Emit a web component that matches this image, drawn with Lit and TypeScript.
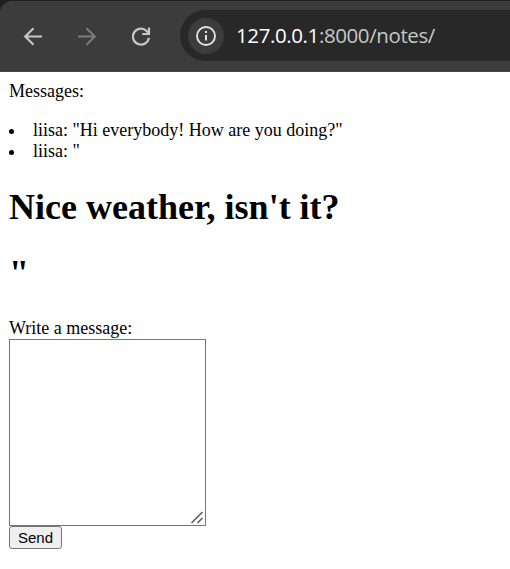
import { LitElement, html, css } from "lit";
import { customElement } from "lit/decorators.js";

@customElement("browser-bar")
class BrowserBar extends LitElement {
  static styles = css`
    :host {
      display: block;
      background: #1f2020;
      padding-top: 1px;
    }
    .bar {
      display: flex;
      align-items: center;
      box-sizing: border-box;
      height: 71px;
      padding: 0 0 1px 20px;
      background: #3c3c3c;
      border-top-left-radius: 12px;
      border-bottom: 1px solid #454545;
    }
    .nav {
      width: 26px;
      height: 26px;
      margin-right: 28px;
      flex: none;
    }
    .reload {
      margin-right: 26px;
    }
    .address {
      flex: 1;
      display: flex;
      align-items: center;
      height: 51px;
      padding-left: 8px;
      background: #282828;
      border-radius: 26px 0 0 26px;
    }
    .info {
      width: 36px;
      height: 36px;
      flex: none;
      margin-right: 12px;
    }
    .url {
      padding-bottom: 2px;
      font: 20.5px/28px "Open Sans", "Noto Sans", sans-serif;
      color: #c7c7c7;
      white-space: nowrap;
      letter-spacing: -0.4px;
    }
    .host {
      color: #ffffff;
    }
  `;
  render() {
    return html`<div class="bar">
      <svg class="nav" viewBox="0 0 26 26" fill="none" stroke="#c7c7c7" stroke-width="2.1">
        <path d="M22 13.5H5.5M13.5 5.2L5.2 13.5l8.3 8.3" />
      </svg>
      <svg class="nav" viewBox="0 0 26 26" fill="none" stroke="#7c7c7c" stroke-width="2.1">
        <path d="M4 13.5H20.5M12.5 5.2l8.3 8.3-8.3 8.3" />
      </svg>
      <svg class="nav reload" viewBox="0 0 26 26" fill="none" stroke="#c7c7c7" stroke-width="2.2">
        <path d="M20.9 14.8A8 8 0 1 1 18.7 8l2.2 2.4" />
        <path d="M21 4.5v6.5h-6.8" />
      </svg>
      <div class="address">
        <svg class="info" viewBox="0 0 36 36">
          <circle cx="18" cy="18" r="18" fill="#3c3c3c" />
          <circle cx="18" cy="18" r="9" fill="none" stroke="#e3e3e3" stroke-width="1.9" />
          <path d="M17 17h2v5.5h-2zM17 13h2v2h-2z" fill="#e3e3e3" />
        </svg>
        <span class="url"><span class="host">127.0.0.1</span>:8000/notes/</span>
      </div>
    </div>`;
  }
}

@customElement("app-root")
class AppRoot extends LitElement {
  static styles = css`
    :host {
      display: block;
      height: 569px;
      overflow: hidden;
      background: #fff;
      color: #000;
      font: 18px/21px "Liberation Serif", serif;
    }
    .page {
      padding: 9px 9px 0;
    }
    .messages {
      margin: 18px 0 0;
      padding: 0;
      list-style: none;
    }
    .item {
      display: flex;
      align-items: center;
    }
    .item::before {
      content: "";
      width: 5px;
      height: 5px;
      margin-right: 19px;
      border-radius: 50%;
      background: #000;
      position: relative;
      top: 1px;
    }
    .heading {
      margin: 24px 0 0;
      font-size: 36px;
      line-height: 42px;
      font-weight: bold;
    }
    .label {
      display: block;
      margin-top: 24px;
    }
    .input {
      display: block;
      box-sizing: border-box;
      width: 197px;
      height: 187px;
      margin: 0;
      border: 1px solid #767676;
      border-radius: 0;
      resize: none;
      outline: none;
    }
    .field {
      display: grid;
      width: 197px;
    }
    .field > * {
      grid-area: 1 / 1;
    }
    .grip {
      place-self: end;
      width: 16px;
      height: 16px;
      margin: 0 1px 1px 0;
      pointer-events: none;
    }
    .send {
      display: block;
      box-sizing: border-box;
      width: 53px;
      height: 23px;
      margin: 0;
      padding: 0;
      border: 1px solid #767676;
      border-radius: 3px;
      background: #efefef;
      color: #000;
      font: 15px/20px "Liberation Sans", Arial, sans-serif;
    }
  `;
  render() {
    return html`<browser-bar></browser-bar>
      <main class="page">
        <div>Messages:</div>
        <ul class="messages">
          <li class="item">liisa: "Hi everybody! How are you doing?"</li>
          <li class="item">liisa: "</li>
        </ul>
        <h1 class="heading">Nice weather, isn't it?</h1>
        <h1 class="heading">"</h1>
        <label class="label" for="message">Write a message:</label>
        <div class="field">
          <textarea class="input" id="message"></textarea>
          <svg class="grip" viewBox="0 0 16 16" fill="none" stroke="#555" stroke-width="1.5">
            <path d="M2.5 14L13.5 3M8.5 14l5-5" />
          </svg>
        </div>
        <button class="send">Send</button>
      </main>`;
  }
}
